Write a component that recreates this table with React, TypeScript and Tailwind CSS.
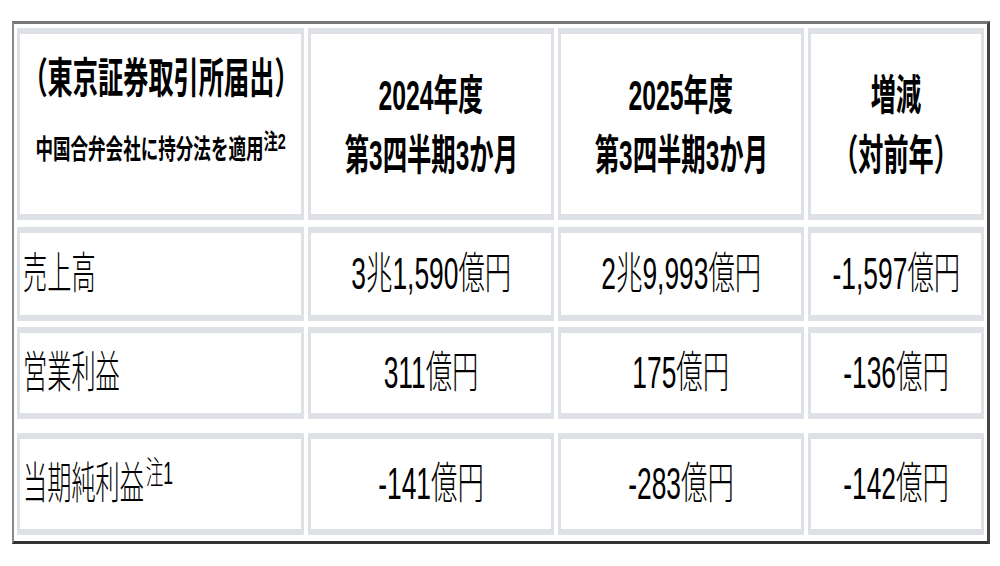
import type { ReactNode } from 'react'

const font = "font-['Liberation_Sans','Noto_Sans_CJK_JP',sans-serif]"

function Cell({ children, className = '' }: { children: ReactNode; className?: string }) {
  return (
    <div className={`border-x-[3px] border-y-[6px] border-[#dde1e6] bg-white flex ${className}`}>
      {children}
    </div>
  )
}

function Value({ text }: { text: string }) {
  return (
    <Cell className="items-center justify-center">
      <span className="inline-block whitespace-nowrap origin-center scale-x-[0.6] text-[44px] font-light leading-none text-black">
        {text}
      </span>
    </Cell>
  )
}

function Label({ text, note }: { text: string; note?: string }) {
  return (
    <Cell className="items-center pl-[3px]">
      <span className="inline-block whitespace-nowrap origin-left scale-x-[0.55] text-[44px] font-light leading-none text-black">
        {text}
        {note && <sup className="text-[32px] relative -top-[15px] ml-[3px]">{note}</sup>}
      </span>
    </Cell>
  )
}

function PeriodHead({ year }: { year: string }) {
  return (
    <Cell className="flex-col items-center justify-center pt-[4px]">
      <span className="inline-block whitespace-nowrap scale-x-[0.59] text-[42px] font-bold leading-[60px]">{year}年度</span>
      <span className="inline-block whitespace-nowrap scale-x-[0.58] text-[42px] font-bold leading-[60px]">第3四半期3か月</span>
    </Cell>
  )
}

const rows = [
  { label: '売上高', values: ['3兆1,590億円', '2兆9,993億円', '-1,597億円'], mt: 'mt-[7px]', h: 'h-[94px]' },
  { label: '営業利益', values: ['311億円', '175億円', '-136億円'], mt: 'mt-[6px]', h: 'h-[92px]' },
  { label: '当期純利益', note: '注1', values: ['-141億円', '-283億円', '-142億円'], mt: 'mt-[14px]', h: 'h-[102px]' },
]

export default function App() {
  return (
    <div className={`w-[1000px] h-[566px] bg-white pt-[21px] pl-[12px] ${font}`}>
      <div className="w-[978px] border-t-[3px] border-l-2 border-r-[3px] border-b-[3px] border-t-[#767676] border-l-[#8a8a8a] border-r-[#444] border-b-[#333] px-[3px] pt-[4px] pb-[6px]">
        {/* header */}
        <div className="grid grid-cols-[287px_246px_246px_176px] gap-x-[4px] h-[192px]">
          <Cell className="flex-col items-center pt-[15px]">
            <span className="inline-block whitespace-nowrap scale-x-[0.6] text-[42px] font-bold leading-[60px]">（東京証券取引所届出）</span>
            <span className="inline-block whitespace-nowrap scale-x-[0.65] text-[27px] font-bold leading-[40px] mt-[21px]">
              中国合弁会社に持分法を適用
              <sup className="text-[22px] relative -top-[10px]">注2</sup>
            </span>
          </Cell>
          <PeriodHead year="2024" />
          <PeriodHead year="2025" />
          <Cell className="flex-col items-center justify-center pt-[4px]">
            <span className="inline-block whitespace-nowrap scale-x-[0.6] text-[42px] font-bold leading-[60px]">増減</span>
            <span className="inline-block whitespace-nowrap scale-x-[0.6] text-[42px] font-bold leading-[60px]">（対前年）</span>
          </Cell>
        </div>

        {rows.map((r) => (
          <div key={r.label} className={`grid grid-cols-[287px_246px_246px_176px] gap-x-[4px] ${r.mt} ${r.h}`}>
            <Label text={r.label} note={r.note} />
            {r.values.map((v, i) => (
              <Value key={i} text={v} />
            ))}
          </div>
        ))}
      </div>
    </div>
  )
}
